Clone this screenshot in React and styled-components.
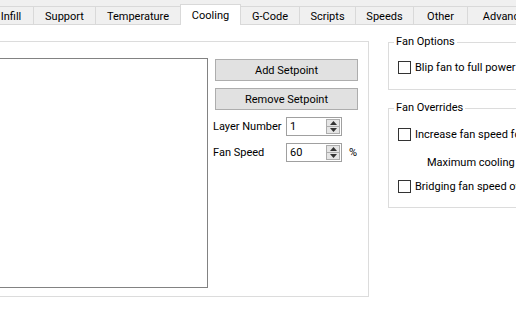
import React from 'react';
import styled, { createGlobalStyle } from 'styled-components';

const Global = createGlobalStyle`
  html, body { margin: 0; padding: 0; background: #ffffff; }
  body {
    font-family: Roboto, "Liberation Sans", sans-serif;
    font-size: 11px;
    color: #000;
  }
  * { box-sizing: border-box; }
`;

const Window = styled.div`
  width: 516px;
  height: 309px;
  overflow: hidden;
  background: #fff;
  display: flex;
  flex-direction: column;
`;

const TabBar = styled.div`
  flex: none;
  height: 25px;
  background: #f0f0f0;
  border-bottom: 1px solid #d9d9d9;
  display: flex;
  align-items: flex-end;
  margin-left: -12px;
`;

const Tab = styled.div`
  flex: 0 0 ${p => p.$w}px;
  height: ${p => (p.$active ? 21 : 18)}px;
  margin-right: -1px;
  margin-bottom: ${p => (p.$active ? -1 : 0)}px;
  background: ${p => (p.$active ? '#ffffff' : '#f0f0f0')};
  border: 1px solid #d9d9d9;
  border-bottom: none;
  position: relative;
  z-index: ${p => (p.$active ? 1 : 0)};
  display: flex;
  align-items: center;
  justify-content: center;
  padding-top: ${p => (p.$active ? 0 : 1)}px;
  white-space: nowrap;
`;

const Page = styled.div`
  flex: 1;
  display: flex;
  align-items: flex-start;
  background: #fff;
`;

const MainGroup = styled.div`
  flex: none;
  margin: 16px 0 0 -20px;
  width: 389px;
  height: 256px;
  border: 1px solid #dcdcdc;
  display: flex;
  padding: 16px 8px 8px 0;
  gap: 5px;
`;

const ListBox = styled.div`
  flex: 1;
  border: 1px solid #828282;
  background: #fff;
`;

const SideColumn = styled.div`
  flex: 0 0 147px;
  display: flex;
  flex-direction: column;
  padding-top: 1px;
`;

const Button = styled.div`
  height: 22px;
  margin: 0 2px ${p => p.$mb || 0}px 2px;
  background: #e1e1e1;
  border: 1px solid #adadad;
  display: flex;
  align-items: center;
  justify-content: center;
  white-space: nowrap;
`;

const FormRow = styled.div`
  display: flex;
  align-items: center;
  height: 19px;
  margin-bottom: 7px;
`;

const Label = styled.div`
  flex: 0 0 73px;
  white-space: nowrap;
`;

const Spin = styled.div`
  flex: 0 0 56px;
  height: 19px;
  border: 1px solid #a0a0a0;
  background: #fff;
  display: flex;
  align-items: stretch;
`;

const SpinValue = styled.div`
  flex: 1;
  padding-left: 3px;
  display: flex;
  align-items: center;
`;

const SpinButtons = styled.div`
  flex: 0 0 14px;
  margin: 1px 1px 1px 0;
  border: 1px solid #adadad;
  background: #e5e5e5;
  display: flex;
  flex-direction: column;
`;

const SpinArrow = styled.div`
  flex: 1;
  display: flex;
  align-items: center;
  justify-content: center;
  border-top: ${p => (p.$down ? '1px solid #adadad' : 'none')};
`;

const Unit = styled.div`
  margin-left: 7px;
`;

const RightColumn = styled.div`
  flex: none;
  width: 160px;
  margin-left: 19px;
  display: flex;
  flex-direction: column;
`;

const GroupBox = styled.div`
  border: 1px solid #dcdcdc;
  border-right: none;
  display: flex;
  flex-direction: column;
  margin-top: ${p => p.$mt}px;
  padding-bottom: ${p => p.$pb}px;
`;

const GroupTitle = styled.div`
  align-self: flex-start;
  margin: -8px 0 0 5px;
  padding: 0 2px;
  background: #fff;
  line-height: 14px;
  white-space: nowrap;
`;

const CheckRow = styled.div`
  display: flex;
  align-items: center;
  height: 16px;
  margin-top: ${p => p.$mt}px;
  padding-left: 9px;
  white-space: nowrap;
`;

const Box = styled.div`
  flex: 0 0 13px;
  height: 13px;
  border: 1px solid #333333;
  background: #fff;
  margin-right: 4px;
`;

const IndentLabel = styled.div`
  height: 16px;
  display: flex;
  align-items: center;
  margin-top: ${p => p.$mt}px;
  padding-left: 38px;
  white-space: nowrap;
`;

const Arrow = ({ up }) => (
  <svg width="7" height="4" viewBox="0 0 7 4">
    {up ? <path d="M0 4 L3.5 0 L7 4 Z" fill="#333" /> : <path d="M0 0 L3.5 4 L7 0 Z" fill="#333" />}
  </svg>
);

const SpinBox = ({ value }) => (
  <Spin>
    <SpinValue>{value}</SpinValue>
    <SpinButtons>
      <SpinArrow><Arrow up /></SpinArrow>
      <SpinArrow $down><Arrow /></SpinArrow>
    </SpinButtons>
  </Spin>
);

const tabs = [
  ['Infill', 46],
  ['Support', 63],
  ['Temperature', 86],
  ['Cooling', 61, true],
  ['G-Code', 60],
  ['Scripts', 57],
  ['Speeds', 59],
  ['Other', 55],
  ['Advanced', 80],
];

export default function App() {
  return (
    <>
      <Global />
      <Window>
        <TabBar>
          {tabs.map(([t, w, a]) => (
            <Tab key={t} $w={w} $active={a}>{t}</Tab>
          ))}
        </TabBar>
        <Page>
          <MainGroup>
            <ListBox />
            <SideColumn>
              <Button $mb={7}>Add Setpoint</Button>
              <Button $mb={7}>Remove Setpoint</Button>
              <FormRow>
                <Label>Layer Number</Label>
                <SpinBox value="1" />
              </FormRow>
              <FormRow>
                <Label>Fan Speed</Label>
                <SpinBox value="60" />
                <Unit>%</Unit>
              </FormRow>
            </SideColumn>
          </MainGroup>
          <RightColumn>
            <GroupBox $mt={17} $pb={14}>
              <GroupTitle>Fan Options</GroupTitle>
              <CheckRow $mt={10}><Box />Blip fan to full power</CheckRow>
            </GroupBox>
            <GroupBox $mt={18} $pb={13}>
              <GroupTitle>Fan Overrides</GroupTitle>
              <CheckRow $mt={11}><Box />Increase fan speed for small layers</CheckRow>
              <IndentLabel $mt={12}>Maximum cooling fan speed</IndentLabel>
              <CheckRow $mt={8}><Box />Bridging fan speed override</CheckRow>
            </GroupBox>
          </RightColumn>
        </Page>
      </Window>
    </>
  );
}
